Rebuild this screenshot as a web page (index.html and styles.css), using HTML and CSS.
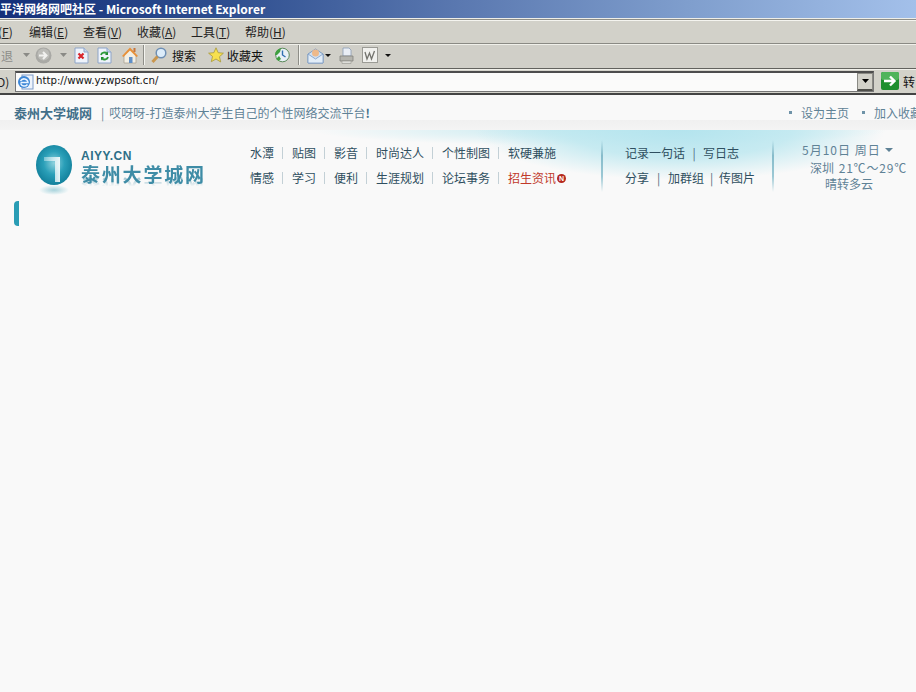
FILE: index.html
```html
<!DOCTYPE html>
<html lang="zh">
<head>
<meta charset="utf-8">
<title>平洋网络网吧社区 - Microsoft Internet Explorer</title>
<link rel="stylesheet" href="styles.css">
</head>
<body>
<div class="titlebar"><span class="title-text">平洋网络网吧社区 - Microsoft Internet Explorer</span></div>
<div class="menubar">
  <span class="menu first">(<u>F</u>)</span>
  <span class="menu">编辑(<u>E</u>)</span>
  <span class="menu">查看(<u>V</u>)</span>
  <span class="menu">收藏(<u>A</u>)</span>
  <span class="menu">工具(<u>T</u>)</span>
  <span class="menu">帮助(<u>H</u>)</span>
</div>
<div class="toolbar">
  <span class="back">退</span>
  <svg class="tb-arrow a1" width="7" height="4" viewBox="0 0 7 4"><path d="M0 0h7L3.500 4z" fill="#8a8a86"/></svg>
  <svg class="ti t-fwd" width="17" height="17" viewBox="0 0 17 17"><circle cx="8.500" cy="8.500" r="8" fill="#a9a9a5"/><circle cx="8.500" cy="7.500" r="6" fill="#bdbdb9"/><path d="M4 8.500h7M8 5l3.500 3.500L8 12" fill="none" stroke="#f2f2f0" stroke-width="2"/></svg>
  <svg class="tb-arrow a2" width="7" height="4" viewBox="0 0 7 4"><path d="M0 0h7L3.500 4z" fill="#8a8a86"/></svg>
  <svg class="ti t-stop" width="15" height="17" viewBox="0 0 15 17"><path d="M1 1h9l4 4v11H1z" fill="#eef3fb" stroke="#8da4c8"/><path d="M10 1v4h4" fill="#c9d6ea" stroke="#8da4c8"/><path d="M4.500 6.500l5 5m0-5l-5 5" stroke="#d8262c" stroke-width="2.200"/></svg>
  <svg class="ti t-ref" width="15" height="17" viewBox="0 0 15 17"><path d="M1 1h9l4 4v11H1z" fill="#eef3fb" stroke="#8da4c8"/><path d="M10 1v4h4" fill="#c9d6ea" stroke="#8da4c8"/><path d="M4 8a3.500 3 0 0 1 6-1.500M11 10a3.500 3 0 0 1-6 1.500" fill="none" stroke="#2c9a3a" stroke-width="1.800"/><path d="M11 4.500v3.500H8zM4 13.500V10h3z" fill="#1f8a30"/></svg>
  <svg class="ti t-home" width="18" height="18" viewBox="0 0 18 18"><path d="M3 9v8h12V9L9 3z" fill="#f3efe4" stroke="#a9a293" stroke-width=".8"/><path d="M1 10l8-8.500 8 8.500-1.500 1L9 4.500 2.500 11z" fill="#e8913a"/><rect x="12.500" y="2" width="2" height="4" fill="#c8763a"/><rect x="8" y="11" width="3.500" height="6" fill="#5f8fc8"/></svg>
  <i class="tb-sep s1"></i>
  <svg class="ti t-search" width="16" height="17" viewBox="0 0 16 17"><circle cx="10" cy="6" r="4.800" fill="#dcecfa" stroke="#6e8fb4" stroke-width="1.500"/><path d="M6.500 9.500L1.500 15" stroke="#c9964e" stroke-width="3"/></svg>
  <span class="tb-label l-search">搜索</span>
  <svg class="ti t-star" width="16" height="16" viewBox="0 0 16 16"><path d="M8 .8l2.200 4.900 5.200.5-3.900 3.500 1.200 5.300L8 12l-4.700 2.700 1.200-5.300L.6 6.200l5.200-.5z" fill="#f7e04e" stroke="#a8993a" stroke-width=".8"/></svg>
  <span class="tb-label l-fav">收藏夹</span>
  <svg class="ti t-hist" width="16" height="16" viewBox="0 0 16 16"><circle cx="8.500" cy="8" r="6.800" fill="#e8f0f6" stroke="#5a8a5a"/><path d="M8.500 3.500V8l3 2" fill="none" stroke="#2f6fb0" stroke-width="1.400"/><path d="M1 8a7 7 0 0 1 6-6.500L6 5l-3 3z" fill="#3fa03f"/><path d="M2 12l3-3 2 3-2.500 2z" fill="#3fa03f"/></svg>
  <i class="tb-sep s2"></i>
  <svg class="ti t-mail" width="17" height="17" viewBox="0 0 17 17"><path d="M1 7l7.500-5L16 7v9H1z" fill="#cfe0f2" stroke="#7d9cc4"/><circle cx="8.500" cy="6" r="3.500" fill="#eeb98a"/><path d="M1 7l7.500 5L16 7v9H1z" fill="#e2edf8" stroke="#7d9cc4" stroke-width=".8"/></svg>
  <svg class="tb-arrow a3" width="6" height="3" viewBox="0 0 6 3"><path d="M0 0h6L3 3z" fill="#111"/></svg>
  <svg class="ti t-print" width="15" height="17" viewBox="0 0 15 17"><path d="M4 1h6l2 2v6H4z" fill="#e9eef5" stroke="#8c9db5" stroke-width=".8"/><path d="M1 9h13v5H1z" fill="#b4b4ae" stroke="#84847e" stroke-width=".8"/><path d="M3 14h9v2.500H3z" fill="#dededa" stroke="#94948e" stroke-width=".6"/></svg>
  <svg class="ti t-word" width="16" height="16" viewBox="0 0 16 16"><rect x=".5" y=".5" width="15" height="15" fill="#f1f1ee" stroke="#9b9b95"/><path d="M3 5l2 7 2.500-6 2 6 3-8" fill="none" stroke="#73736d" stroke-width="1.300"/></svg>
  <svg class="tb-arrow a4" width="6" height="3" viewBox="0 0 6 3"><path d="M0 0h6L3 3z" fill="#111"/></svg>
</div>
<div class="addressbar">
  <span class="addr-label">D)</span>
  <div class="addr-input">
    <svg class="addr-ie" width="17" height="16" viewBox="0 0 17 16"><rect x="5" y="1" width="11" height="14" fill="#eef3fb" stroke="#7f9cc8"/><circle cx="7" cy="8" r="6" fill="#3c86d6"/><path d="M3.500 8.500h7.500A4 4 0 0 0 3.500 7M10.500 10.500A4 4 0 0 1 3.600 9.500" fill="none" stroke="#eaf4ff" stroke-width="1.500"/></svg>
    <span class="addr-url">http://www.yzwpsoft.cn/</span>
    <span class="addr-drop"><svg width="7" height="4" viewBox="0 0 7 4"><path d="M0 0h7L3.500 4z" fill="#000"/></svg></span>
  </div>
  <svg class="go-icon" width="18" height="18" viewBox="0 0 18 18"><rect width="18" height="18" rx="2" fill="#1f8f2e"/><rect width="18" height="8" rx="2" fill="#4fb45a"/><path d="M3 9h10M9 4.500L13.500 9 9 13.500" fill="none" stroke="#fff" stroke-width="2.400"/></svg>
  <span class="go-text">转</span>
</div>
<div class="divider"></div>
<div class="page">
  <div class="topstrip">
    <div class="slogan"><strong>泰州大学城网</strong><span class="slogan-bar">|</span><span class="slogan-text">哎呀呀-打造泰州大学生自己的个性网络交流平台<b>!</b></span></div>
    <div class="toplinks">
      <span class="toplink"><i class="dot"></i>设为主页</span>
      <span class="toplink"><i class="dot"></i>加入收藏</span>
    </div>
  </div>
  <div class="band"></div>
  <div class="header">
    <div class="logo">
      <svg class="logo-ball" width="40" height="52" viewBox="0 0 40 52">
        <defs>
          <radialGradient id="ball" cx="50%" cy="45%" r="58%"><stop offset="0" stop-color="#8fd2de"/><stop offset=".5" stop-color="#2a9fb8"/><stop offset="1" stop-color="#0f7c98"/></radialGradient>
          <linearGradient id="one" x1="0" y1="0" x2="1" y2="0"><stop offset="0" stop-color="#d8f0f4" stop-opacity=".5"/><stop offset="1" stop-color="#ffffff"/></linearGradient>
          <radialGradient id="shade"><stop offset="0" stop-color="#a8d3dc"/><stop offset="1" stop-color="#f8fafa"/></radialGradient>
        </defs>
        <ellipse cx="19" cy="45" rx="15" ry="5" fill="url(#shade)"/>
        <ellipse cx="19" cy="20" rx="18" ry="20" fill="url(#ball)"/>
        <path d="M9 12h16v25h-5V16H9z" fill="url(#one)" opacity=".9"/>
      </svg>
      <div class="logo-words">
        <span class="logo-en">AIYY.CN</span>
        <span class="logo-cn">泰州大学城网</span>
      </div>
    </div>
    <div class="nav">
      <div class="nav-row">
        <a class="n w2">水潭</a><a class="n w2">贴图</a><a class="n w2">影音</a><a class="n w4">时尚达人</a><a class="n w4">个性制图</a><a class="n w4 last">软硬兼施</a>
      </div>
      <div class="nav-row">
        <a class="n w2">情感</a><a class="n w2">学习</a><a class="n w2">便利</a><a class="n w4">生涯规划</a><a class="n w4">论坛事务</a><a class="n w4 last hot">招生资讯<i class="new">N</i></a>
      </div>
    </div>
    <i class="vline v1"></i>
    <div class="actions">
      <div class="act-row"><a>记录一句话</a><i>|</i><a>写日志</a></div>
      <div class="act-row tight"><a>分享</a><i>|</i><a>加群组</a><i class="near">|</i><a>传图片</a></div>
    </div>
    <i class="vline v2"></i>
    <div class="weather">
      <div class="w-date">5月10日 周日<svg width="8" height="4" viewBox="0 0 8 4"><path d="M0 0h8L4 4z" fill="#5f8296"/></svg></div>
      <div class="w-temp">深圳 <span class="w-deg">21℃～29℃</span></div>
      <div class="w-sky">晴转多云</div>
    </div>
  </div>
  <div class="side-tab"></div>
</div>
</body>
</html>
```
FILE: styles.css
```css
html, body {
  margin: 0;
  padding: 0;
  width: 916px;
  height: 692px;
  overflow: hidden;
  background: #f9f9f9;
  font-family: "Noto Sans CJK SC", "Liberation Sans", sans-serif;
  font-size: 12px;
}
.titlebar {
  height: 16px;
  padding-bottom: 2px;
  background: linear-gradient(90deg, #14307a 0%, #2f4f90 25%, #5a78b0 50%, #7f9ecd 75%, #a3c0ea 100%);
  display: flex;
  align-items: center;
  border-bottom: 1px solid #eeeee8;
}
.title-text {
  color: #fff;
  font-family: "Noto Sans CJK SC", sans-serif;
  font-weight: 700;
  font-size: 12px;
  white-space: nowrap;
}
.menubar {
  height: 23px;
  background: #d2d1c9;
  border-top: 1px solid #8f8f88;
  border-bottom: 1px solid #8a8a84;
  display: flex;
  align-items: center;
  color: #222;
  box-shadow: inset 0 1px 0 #f4f4ef;
}
.menu {
  margin-left: 16px;
  width: 38px;
  white-space: nowrap;
  line-height: 1;
}
.menu.first { margin-left: -2px; width: 15px; }
.toolbar {
  height: 22px;
  padding-bottom: 2px;
  background: #d0cfc8;
  border-bottom: 1px solid #62625e;
  display: flex;
  align-items: center;
  box-shadow: inset 0 1px 0 #f0f0ea;
}
.toolbar svg { flex: none; display: block; }
.back { color: #8c8c88; margin-left: 1px; width: 12px; font-size: 12px; }
.a1 { margin-left: 10px; }
.t-fwd { margin-left: 5px; }
.a2 { margin-left: 8px; }
.t-stop { margin-left: 7px; }
.t-ref { margin-left: 8px; }
.t-home { margin-left: 9px; }
.tb-sep { flex: none; width: 1px; height: 20px; background: #8e8e88; border-right: 1px solid #f4f4ef; }
.s1 { margin-left: 4px; }
.t-search { margin-left: 6px; }
.tb-label { color: #111; font-size: 12px; white-space: nowrap; }
.l-search { margin-left: 5px; }
.t-star { margin-left: 12px; }
.l-fav { margin-left: 3px; }
.t-hist { margin-left: 11px; }
.s2 { margin-left: 8px; }
.t-mail { margin-left: 7px; }
.a3 { margin-left: 1px; }
.t-print { margin-left: 8px; }
.t-word { margin-left: 8px; }
.a4 { margin-left: 7px; }
.addressbar {
  height: 24px;
  background: #d3d2ca;
  display: flex;
  align-items: center;
  box-shadow: inset 0 1px 0 #f0f0ea;
}
.addr-label { width: 15px; margin-left: -3px; margin-right: 3px; color: #222; white-space: nowrap; }
.addr-input {
  width: 859px;
  height: 21px;
  box-sizing: border-box;
  background: #fbfbfa;
  border: 1px solid #777;
  border-top: 2px solid #4d4d4d;
  display: flex;
  align-items: center;
  flex: none;
}
.addr-ie { margin-left: 1px; flex: none; }
.addr-url {
  margin-left: 2px;
  margin-bottom: 2px;
  font-family: "DejaVu Sans", sans-serif;
  font-size: 10.200px;
  color: #111;
  flex: 1;
}
.addr-drop {
  width: 16px;
  height: 18px;
  background: #d2d1c9;
  border: 1px solid #8a8a84;
  border-bottom: 2px solid #4e4e4a;
  box-sizing: border-box;
  display: flex;
  align-items: center;
  justify-content: center;
}
.go-icon { margin-left: 7px; flex: none; }
.go-text { margin-left: 4px; color: #111; white-space: nowrap; }
.divider {
  height: 2px;
  background: #444;
}
.page { position: relative; }
.topstrip {
  height: 15px;
  padding-top: 10px;
  display: flex;
  justify-content: space-between;
  align-items: center;
  padding-left: 14px;
  color: #5f8296;
  white-space: nowrap;
}
.slogan strong { color: #43708a; font-weight: 700; font-size: 13px; }
.slogan-bar { margin-left: 9px; margin-right: 5px; }
.slogan-text b { color: #43708a; }
.toplinks { display: flex; width: 127px; flex: none; overflow: hidden; }
.toplink { display: flex; align-items: center; margin-right: 13px; flex: none; }
.dot { width: 3px; height: 3px; background: #6f93a8; margin-right: 9px; flex: none; }
.band {
  height: 10px;
  background: linear-gradient(#f0f0f0, #f4f4f4);
}
.header {
  height: 66px;
  display: flex;
  padding-left: 35px;
  background:
    radial-gradient(ellipse 205px 50px at 680px 0, #b4e4ee 0%, rgba(190,232,240,.85) 55%, rgba(249,249,249,0) 100%),
    radial-gradient(ellipse 290px 16px at 600px 0, rgba(185,230,238,.85) 0%, rgba(249,249,249,0) 100%),
    #f9f9f9;
}
.logo { display: flex; width: 215px; flex: none; }
.logo-ball { margin-top: 15px; flex: none; }
.logo-words { display: flex; flex-direction: column; margin-left: 6px; margin-top: 20px; }
.logo-en { color: #2d6f88; font-family: "Liberation Sans", sans-serif; font-weight: 700; font-size: 12px; line-height: 13px; letter-spacing: .5px; }
.logo-cn {
  color: #3e8ca6;
  font-weight: 700;
  font-size: 19px;
  line-height: 21px;
  letter-spacing: 1.800px;
  white-space: nowrap;
  -webkit-box-reflect: below -7px linear-gradient(transparent 55%, rgba(255,255,255,.55));
}
.nav { width: 351px; flex: none; padding-top: 10px; color: #2f4f60; }
.nav-row { display: flex; height: 25px; align-items: center; }
.n { flex: none; margin-right: 18px; position: relative; white-space: nowrap; line-height: 16px; }
.w2 { width: 24px; }
.w4 { width: 48px; }
.n::after {
  content: "";
  position: absolute;
  right: -9px;
  top: 2px;
  width: 1px;
  height: 12px;
  background: #c3d0d6;
}
.n.last::after { display: none; }
.hot { color: #c1392b; }
.new {
  display: inline-block;
  width: 9px;
  height: 9px;
  line-height: 9px;
  margin-left: 1px;
  border-radius: 50%;
  background: #b5281e;
  color: #fff;
  font-family: "Liberation Sans", sans-serif;
  font-size: 7px;
  font-style: normal;
  font-weight: 700;
  text-align: center;
  vertical-align: 2px;
}
.vline {
  flex: none;
  width: 2px;
  height: 52px;
  margin-top: 10px;
  background: linear-gradient(rgba(120,180,196,0), #86bccb 30%, #9cc8d4 70%, rgba(120,180,196,0));
}
.actions { width: 169px; flex: none; padding-top: 10px; padding-left: 22px; box-sizing: border-box; color: #2f4f60; }
.act-row { display: flex; height: 25px; align-items: center; white-space: nowrap; }
.act-row i { font-style: normal; width: 18px; text-align: center; color: #4f6f80; }
.act-row.tight i { width: 19px; }
.act-row.tight i.near { width: 15px; }
.weather { flex: none; padding-top: 11px; color: #5f8296; position: relative; white-space: nowrap; }
.w-date { margin-left: 28px; height: 18px; line-height: 18px; letter-spacing: 1px; display: flex; align-items: center; }
.w-date svg { margin-left: 4px; }
.w-temp { margin-left: 36px; height: 18px; line-height: 18px; }
.w-deg { letter-spacing: .8px; margin-left: 2px; }
.w-sky { margin-left: 51px; height: 14px; line-height: 14px; }
.side-tab {
  position: absolute;
  left: 14px;
  top: 106px;
  width: 5px;
  height: 25px;
  background: #2a9db5;
  border-radius: 4px 0 0 4px;
}
```
